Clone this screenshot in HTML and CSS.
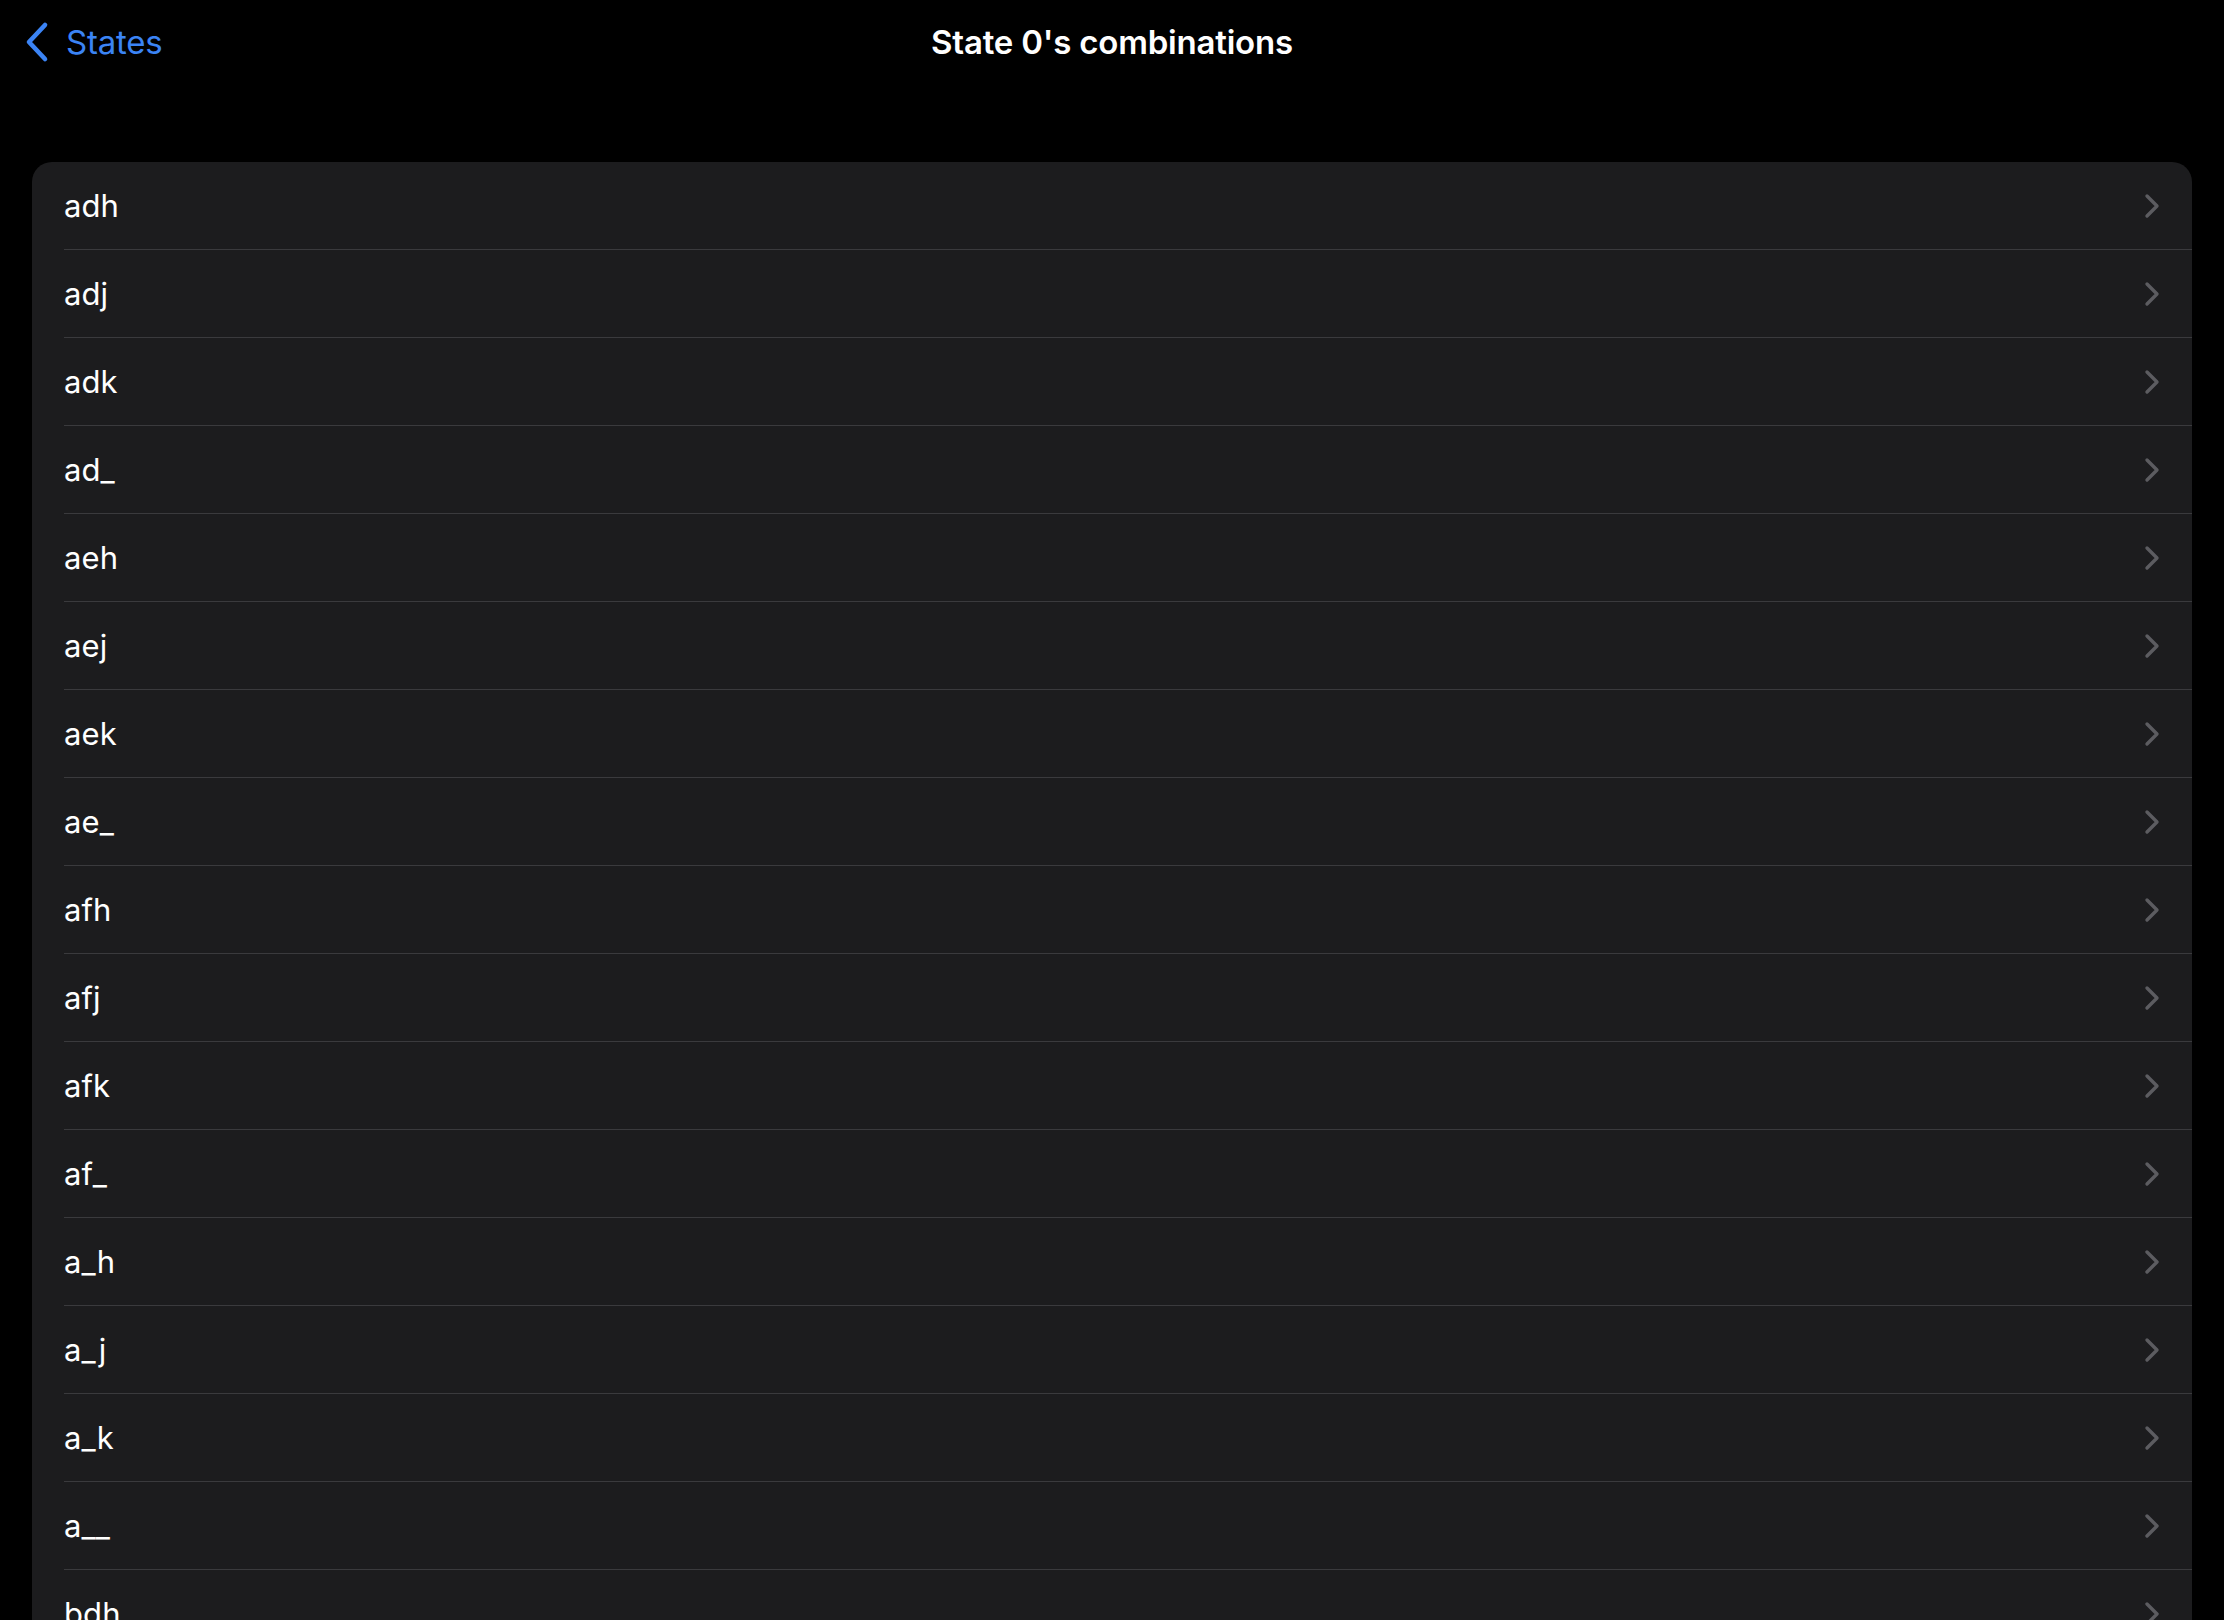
FILE: index.html
```html
<!DOCTYPE html>
<html lang="en">
<head>
<meta charset="utf-8">
<title>State 0's combinations</title>
<link rel="stylesheet" href="styles.css">
</head>
<body>
<header class="nav">
  <div class="nav-left">
    <a class="back" href="#">
      <svg class="back-icon" width="26" height="42" viewBox="0 0 26 42" aria-hidden="true">
        <path d="M21 4 L5 21 L21 38" fill="none" stroke="currentColor" stroke-width="4.6" stroke-linecap="round" stroke-linejoin="round"/>
      </svg>
      <span class="back-label">States</span>
    </a>
  </div>
  <h1 class="nav-title">State 0's combinations</h1>
  <div class="nav-right"></div>
</header>
<main class="content">
  <ul class="list">
    <li class="row"><div class="row-inner"><span class="row-label">adh</span><svg class="chev" width="18" height="28" viewBox="0 0 18 28"><path d="M4 4 L14 14 L4 24" fill="none" stroke="currentColor" stroke-width="3.4" stroke-linecap="round" stroke-linejoin="round"/></svg></div></li>
    <li class="row"><div class="row-inner"><span class="row-label">adj</span><svg class="chev" width="18" height="28" viewBox="0 0 18 28"><path d="M4 4 L14 14 L4 24" fill="none" stroke="currentColor" stroke-width="3.4" stroke-linecap="round" stroke-linejoin="round"/></svg></div></li>
    <li class="row"><div class="row-inner"><span class="row-label">adk</span><svg class="chev" width="18" height="28" viewBox="0 0 18 28"><path d="M4 4 L14 14 L4 24" fill="none" stroke="currentColor" stroke-width="3.4" stroke-linecap="round" stroke-linejoin="round"/></svg></div></li>
    <li class="row"><div class="row-inner"><span class="row-label">ad_</span><svg class="chev" width="18" height="28" viewBox="0 0 18 28"><path d="M4 4 L14 14 L4 24" fill="none" stroke="currentColor" stroke-width="3.4" stroke-linecap="round" stroke-linejoin="round"/></svg></div></li>
    <li class="row"><div class="row-inner"><span class="row-label">aeh</span><svg class="chev" width="18" height="28" viewBox="0 0 18 28"><path d="M4 4 L14 14 L4 24" fill="none" stroke="currentColor" stroke-width="3.4" stroke-linecap="round" stroke-linejoin="round"/></svg></div></li>
    <li class="row"><div class="row-inner"><span class="row-label">aej</span><svg class="chev" width="18" height="28" viewBox="0 0 18 28"><path d="M4 4 L14 14 L4 24" fill="none" stroke="currentColor" stroke-width="3.4" stroke-linecap="round" stroke-linejoin="round"/></svg></div></li>
    <li class="row"><div class="row-inner"><span class="row-label">aek</span><svg class="chev" width="18" height="28" viewBox="0 0 18 28"><path d="M4 4 L14 14 L4 24" fill="none" stroke="currentColor" stroke-width="3.4" stroke-linecap="round" stroke-linejoin="round"/></svg></div></li>
    <li class="row"><div class="row-inner"><span class="row-label">ae_</span><svg class="chev" width="18" height="28" viewBox="0 0 18 28"><path d="M4 4 L14 14 L4 24" fill="none" stroke="currentColor" stroke-width="3.4" stroke-linecap="round" stroke-linejoin="round"/></svg></div></li>
    <li class="row"><div class="row-inner"><span class="row-label">afh</span><svg class="chev" width="18" height="28" viewBox="0 0 18 28"><path d="M4 4 L14 14 L4 24" fill="none" stroke="currentColor" stroke-width="3.4" stroke-linecap="round" stroke-linejoin="round"/></svg></div></li>
    <li class="row"><div class="row-inner"><span class="row-label">afj</span><svg class="chev" width="18" height="28" viewBox="0 0 18 28"><path d="M4 4 L14 14 L4 24" fill="none" stroke="currentColor" stroke-width="3.4" stroke-linecap="round" stroke-linejoin="round"/></svg></div></li>
    <li class="row"><div class="row-inner"><span class="row-label">afk</span><svg class="chev" width="18" height="28" viewBox="0 0 18 28"><path d="M4 4 L14 14 L4 24" fill="none" stroke="currentColor" stroke-width="3.4" stroke-linecap="round" stroke-linejoin="round"/></svg></div></li>
    <li class="row"><div class="row-inner"><span class="row-label">af_</span><svg class="chev" width="18" height="28" viewBox="0 0 18 28"><path d="M4 4 L14 14 L4 24" fill="none" stroke="currentColor" stroke-width="3.4" stroke-linecap="round" stroke-linejoin="round"/></svg></div></li>
    <li class="row"><div class="row-inner"><span class="row-label">a_h</span><svg class="chev" width="18" height="28" viewBox="0 0 18 28"><path d="M4 4 L14 14 L4 24" fill="none" stroke="currentColor" stroke-width="3.4" stroke-linecap="round" stroke-linejoin="round"/></svg></div></li>
    <li class="row"><div class="row-inner"><span class="row-label">a_j</span><svg class="chev" width="18" height="28" viewBox="0 0 18 28"><path d="M4 4 L14 14 L4 24" fill="none" stroke="currentColor" stroke-width="3.4" stroke-linecap="round" stroke-linejoin="round"/></svg></div></li>
    <li class="row"><div class="row-inner"><span class="row-label">a_k</span><svg class="chev" width="18" height="28" viewBox="0 0 18 28"><path d="M4 4 L14 14 L4 24" fill="none" stroke="currentColor" stroke-width="3.4" stroke-linecap="round" stroke-linejoin="round"/></svg></div></li>
    <li class="row"><div class="row-inner"><span class="row-label">a__</span><svg class="chev" width="18" height="28" viewBox="0 0 18 28"><path d="M4 4 L14 14 L4 24" fill="none" stroke="currentColor" stroke-width="3.4" stroke-linecap="round" stroke-linejoin="round"/></svg></div></li>
    <li class="row"><div class="row-inner"><span class="row-label">bdh</span><svg class="chev" width="18" height="28" viewBox="0 0 18 28"><path d="M4 4 L14 14 L4 24" fill="none" stroke="currentColor" stroke-width="3.4" stroke-linecap="round" stroke-linejoin="round"/></svg></div></li>
  </ul>
</main>
</body>
</html>
```

FILE: styles.css
```css
html, body {
  margin: 0;
  padding: 0;
  background: #000000;
  overflow: hidden;
  height: 100%;
}

body {
  font-family: Inter, "Noto Sans", "DejaVu Sans", sans-serif;
  color: #ffffff;
  -webkit-font-smoothing: antialiased;
}

.nav {
  display: grid;
  grid-template-columns: 1fr auto 1fr;
  align-items: center;
  height: 84px;
}

.nav-left {
  display: flex;
  align-items: center;
  padding-left: 24px;
}

.back {
  display: flex;
  align-items: center;
  gap: 16px;
  color: #3b84f5;
  text-decoration: none;
}

.back-icon {
  display: block;
}

.back-label {
  font-size: 33px;
  font-weight: 400;
  letter-spacing: -0.2px;
}

.nav-title {
  margin: 0;
  font-size: 33px;
  font-weight: 600;
  letter-spacing: -0.2px;
  color: #ffffff;
}

.content {
  padding: 78px 32px 0 32px;
}

.list {
  list-style: none;
  margin: 0;
  padding: 0;
  background: #1c1c1e;
  border-radius: 20px 20px 0 0;
  overflow: hidden;
}

.row {
  padding-left: 32px;
}

.row-inner {
  display: flex;
  align-items: center;
  justify-content: space-between;
  height: 87px;
  border-bottom: 1px solid #3a3a3d;
  padding-right: 31px;
}

.row-label {
  font-size: 31px;
  font-weight: 400;
  color: #ffffff;
  letter-spacing: 0.1px;
}

.chev {
  display: block;
  color: #5c5c60;
}
```
